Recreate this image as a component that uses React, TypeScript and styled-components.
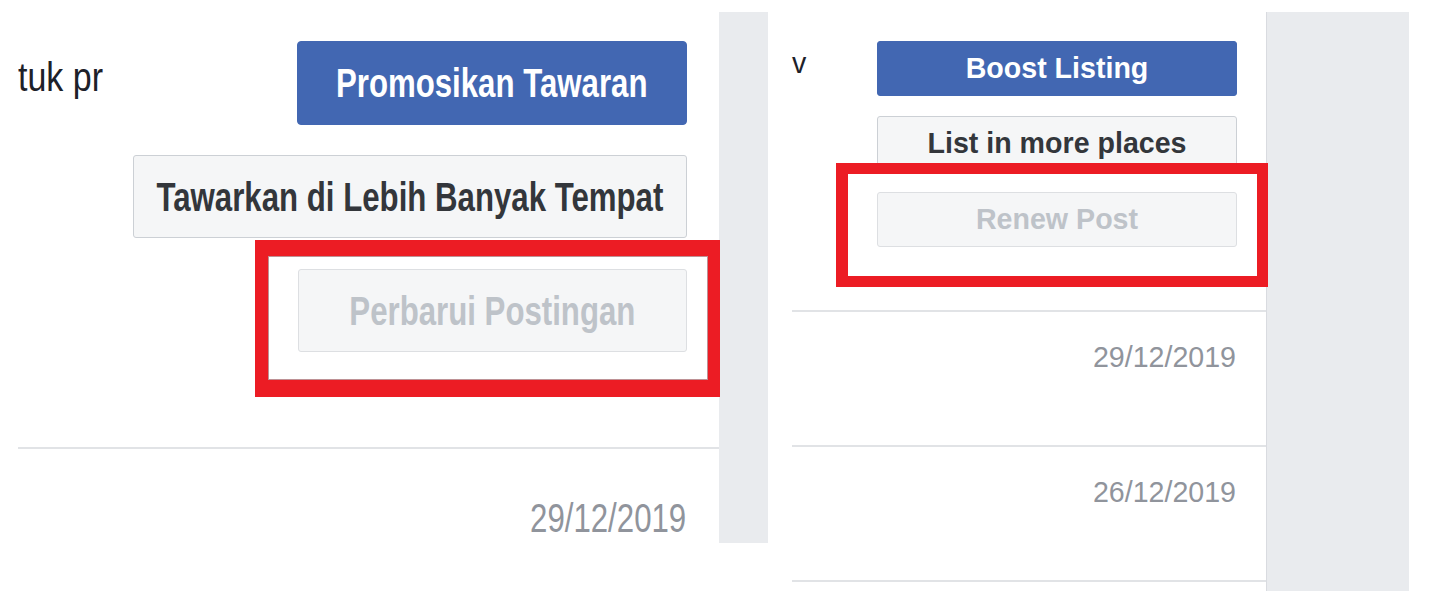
import React from "react";
import styled, { createGlobalStyle, css } from "styled-components";

const GlobalStyle = createGlobalStyle`
  html, body { margin: 0; padding: 0; background: #ffffff; }
  body { font-family: "Liberation Sans", Arial, Helvetica, sans-serif; }
  * { box-sizing: border-box; }
`;

const Page = styled.div`
  display: flex;
  align-items: flex-start;
  gap: 24px;
  width: 1446px;
  height: 603px;
  padding: 12px 0 0 18px;
  overflow: hidden;
`;

const Shot = styled.div<{ $main: number; $side: number; $height: number }>`
  display: grid;
  grid-template-columns: ${(p) => p.$main}px ${(p) => p.$side}px;
  height: ${(p) => p.$height}px;
  flex-shrink: 0;
`;

const Main = styled.div`
  background: #ffffff;
  display: flex;
  flex-direction: column;
  min-width: 0;
`;

const Side = styled.div<{ $edge?: boolean }>`
  background: #e9ebee;
  border-left: ${(p) => (p.$edge ? "1px solid #d9dbe0" : "none")};
`;

const Top = styled.div<{ $h: number; $pr: number }>`
  display: flex;
  justify-content: space-between;
  align-items: flex-start;
  height: ${(p) => p.$h}px;
  padding: 29px ${(p) => p.$pr}px 0 0;
  flex-shrink: 0;
`;

const Fragment = styled.span<{ $size: number; $lh: number; $sx: number; $mt: number }>`
  display: inline-block;
  font-size: ${(p) => p.$size}px;
  line-height: ${(p) => p.$lh}px;
  margin-top: ${(p) => p.$mt}px;
  color: #1d2129;
  white-space: nowrap;
  transform: scaleX(${(p) => p.$sx});
  transform-origin: left center;
`;

const Actions = styled.div`
  display: flex;
  flex-direction: column;
  align-items: flex-end;
`;

type Variant = "primary" | "secondary" | "disabled";

const variants = {
  primary: css`
    background: #4267b2;
    border-color: #4267b2;
    color: #ffffff;
  `,
  secondary: css`
    background: #f5f6f7;
    border-color: #ccd0d5;
    color: #33363b;
  `,
  disabled: css`
    background: #f5f6f7;
    border-color: #dddfe2;
    color: #bec3c9;
  `,
};

const Button = styled.button<{
  $variant: Variant;
  $w: number;
  $h: number;
  $mt?: number;
  $size: number;
  $radius: number;
}>`
  display: flex;
  align-items: center;
  justify-content: center;
  width: ${(p) => p.$w}px;
  height: ${(p) => p.$h}px;
  margin: ${(p) => p.$mt ?? 0}px 0 0 0;
  padding: 0;
  border: 1px solid;
  border-radius: ${(p) => p.$radius}px;
  font-family: inherit;
  font-size: ${(p) => p.$size}px;
  font-weight: bold;
  overflow: visible;
  cursor: pointer;
  ${(p) => variants[p.$variant]}
  &:disabled { cursor: default; }
`;

const ButtonText = styled.span<{ $sx: number }>`
  display: inline-block;
  flex-shrink: 0;
  white-space: nowrap;
  line-height: 1;
  transform: scaleX(${(p) => p.$sx});
  transform-origin: center;
`;

const Highlight = styled.div<{
  $bw: string;
  $pad: string;
  $mt: number;
  $mr: number;
  $inner?: boolean;
}>`
  position: relative;
  background: #ffffff;
  border-style: solid;
  border-color: #ec1c24;
  border-width: ${(p) => p.$bw};
  padding: ${(p) => p.$pad};
  margin-top: ${(p) => p.$mt}px;
  margin-right: ${(p) => -p.$mr}px;
  box-shadow: ${(p) => (p.$inner ? "inset 0 0 0 1px rgba(110, 10, 20, 0.45)" : "none")};
`;

const Row = styled.div<{ $h?: number; $pt: number; $pr: number }>`
  display: flex;
  justify-content: flex-end;
  align-items: flex-start;
  border-top: 2px solid #e1e3e6;
  padding: ${(p) => p.$pt}px ${(p) => p.$pr}px 0 0;
  ${(p) => (p.$h ? `height: ${p.$h}px; flex-shrink: 0;` : "flex: 1;")}
`;

const DateText = styled.span<{ $size: number; $lh: number; $sx: number }>`
  display: inline-block;
  font-size: ${(p) => p.$size}px;
  line-height: ${(p) => p.$lh}px;
  color: #90949c;
  white-space: nowrap;
  transform: scaleX(${(p) => p.$sx});
  transform-origin: right center;
`;

const L = { size: 40, sx: 0.78 };
const R = { size: 28.6, sx: 1 };

export default function App() {
  return (
    <>
      <GlobalStyle />
      <Page>
        <Shot $main={701} $side={49} $height={531}>
          <Main>
            <Top $h={435} $pr={32}>
              <Fragment $size={L.size} $lh={40} $sx={0.85} $mt={16}>
                tuk pr
              </Fragment>
              <Actions>
                <Button $variant="primary" $w={390} $h={84} $size={L.size} $radius={4}>
                  <ButtonText $sx={L.sx}>Promosikan Tawaran</ButtonText>
                </Button>
                <Button $variant="secondary" $w={554} $h={83} $mt={30} $size={L.size} $radius={3}>
                  <ButtonText $sx={L.sx}>Tawarkan di Lebih Banyak Tempat</ButtonText>
                </Button>
                <Highlight $bw="16px 12px 17px 13px" $pad="13px 21px 28px 30px" $mt={2} $mr={33} $inner>
                  <Button $variant="disabled" disabled $w={389} $h={83} $size={L.size} $radius={3}>
                    <ButtonText $sx={L.sx}>Perbarui Postingan</ButtonText>
                  </Button>
                </Highlight>
              </Actions>
            </Top>
            <Row $pt={49} $pr={33}>
              <DateText $size={L.size} $lh={40} $sx={L.sx}>29/12/2019</DateText>
            </Row>
          </Main>
          <Side />
        </Shot>

        <Shot $main={474} $side={143} $height={579}>
          <Main>
            <Top $h={298} $pr={29}>
              <Fragment $size={R.size} $lh={29} $sx={R.sx} $mt={8}>
                v
              </Fragment>
              <Actions>
                <Button $variant="primary" $w={360} $h={55} $size={R.size} $radius={3}>
                  <ButtonText $sx={R.sx}>Boost Listing</ButtonText>
                </Button>
                <Button $variant="secondary" $w={360} $h={55} $mt={20} $size={R.size} $radius={3}>
                  <ButtonText $sx={R.sx}>List in more places</ButtonText>
                </Button>
                <Highlight $bw="11px 11px 11px 12px" $pad="18px 20px 29px 29px" $mt={-8} $mr={31}>
                  <Button $variant="disabled" disabled $w={360} $h={55} $size={R.size} $radius={3}>
                    <ButtonText $sx={R.sx}>Renew Post</ButtonText>
                  </Button>
                </Highlight>
              </Actions>
            </Top>
            <Row $h={135} $pt={31} $pr={30}>
              <DateText $size={R.size} $lh={29} $sx={R.sx}>29/12/2019</DateText>
            </Row>
            <Row $h={135} $pt={31} $pr={30}>
              <DateText $size={R.size} $lh={29} $sx={R.sx}>26/12/2019</DateText>
            </Row>
            <Row $pt={0} $pr={30} />
          </Main>
          <Side $edge />
        </Shot>
      </Page>
    </>
  );
}
